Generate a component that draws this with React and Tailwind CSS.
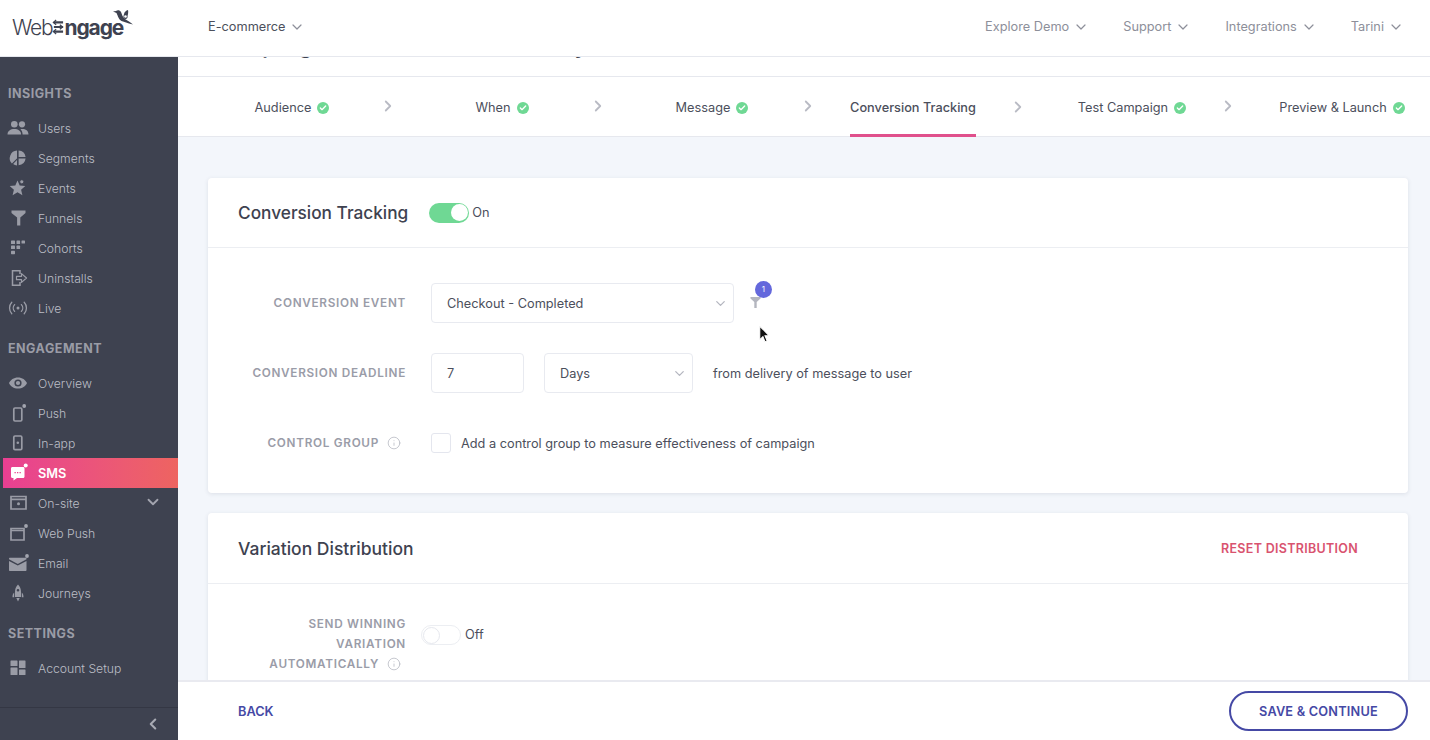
import { ChevronDown, ChevronRight, ChevronLeft, Check, Info } from 'lucide-react';

const ICON = 'w-[22px] h-[22px] text-[#9a9ca6]';

const Dot = ({ cx, cy }) => <circle cx={cx} cy={cy} r="1.9" fill="#a3a5af" stroke="none" />;

const icons = {
  users: (
    <svg viewBox="0 0 22 22" className={ICON} fill="currentColor">
      <circle cx="7.3" cy="7.3" r="3.3" />
      <circle cx="15" cy="7.3" r="3.1" />
      <path d="M0.5 17.5c0-3.8 3-5.6 6.8-5.6s6.8 1.8 6.8 5.6z" />
      <path d="M15.6 17.5c0-2.2-.8-3.9-2.2-5.2.6-.2 1.2-.3 1.9-.3 3.4 0 6.2 1.7 6.2 5.5z" />
    </svg>
  ),
  segments: (
    <svg viewBox="0 0 22 22" className={ICON} fill="currentColor">
      <path d="M10 3.6v7.8h-.1l-5 5.2A7.7 7.7 0 0 1 10 3.6z" />
      <path d="M11.6 3.6a7.7 7.7 0 0 1 7 6.4h-7z" />
      <path d="M11.6 11.6h7a7.7 7.7 0 0 1-7 6.7z" />
      <path d="M10 13.1v5.3a7.6 7.6 0 0 1-3.9-1.3z" />
    </svg>
  ),
  events: (
    <svg viewBox="0 0 22 22" className={ICON} fill="currentColor">
      <path d="M10.5 3.5l2.2 5 5.6.5-4.2 3.7 1.3 5.5-4.9-2.9-4.9 2.9 1.3-5.5L2.7 9l5.6-.5z" />
      <circle cx="14.8" cy="4.8" r="2.1" stroke="#3e4250" strokeWidth="1" />
    </svg>
  ),
  funnels: (
    <svg viewBox="0 0 22 22" className={ICON} fill="currentColor">
      <path d="M4.5 3.5h14v2.4l-5.2 4.6v8h-3.2v-8L4.5 5.9z" />
    </svg>
  ),
  cohorts: (
    <svg viewBox="0 0 22 22" className={ICON} fill="currentColor">
      <rect x="4" y="3.5" width="4" height="3.5" rx=".6" />
      <rect x="9.5" y="3.5" width="3.6" height="3.5" rx=".6" />
      <rect x="14.5" y="3.5" width="3.5" height="3" rx=".6" />
      <rect x="4" y="8.6" width="4" height="3.5" rx=".6" />
      <rect x="9.5" y="8.6" width="3.6" height="3.5" rx=".6" />
      <rect x="4" y="13.7" width="4" height="3.5" rx=".6" />
    </svg>
  ),
  uninstalls: (
    <svg viewBox="0 0 22 22" className={ICON} fill="none" stroke="currentColor" strokeWidth="1.5">
      <path d="M13 7V3.8H5.5v14.4H13V15" />
      <path d="M9.5 9.3h5V6.6l5 4.4-5 4.4v-2.7h-5z" strokeLinejoin="round" strokeWidth="1.2" />
    </svg>
  ),
  live: (
    <svg viewBox="0 0 22 22" className={ICON} fill="none" stroke="currentColor" strokeWidth="1.3" strokeLinecap="round">
      <circle cx="11" cy="11" r="1.5" fill="currentColor" stroke="none" />
      <path d="M7.6 7.6a5 5 0 0 0 0 6.8M14.4 7.6a5 5 0 0 1 0 6.8" />
      <path d="M4.8 5.2a8.6 8.6 0 0 0 0 11.6M17.2 5.2a8.6 8.6 0 0 1 0 11.6" />
    </svg>
  ),
  overview: (
    <svg viewBox="0 0 22 22" className={ICON} fill="currentColor">
      <path fillRule="evenodd" d="M11 5.4c4.2 0 7.6 2.4 9 5.6-1.4 3.2-4.8 5.6-9 5.6S3.4 14.2 2 11c1.4-3.2 4.8-5.6 9-5.6zm0 2a3.6 3.6 0 1 0 0 7.2 3.6 3.6 0 0 0 0-7.2zm0 1.5a2.1 2.1 0 1 1 0 4.2 2.1 2.1 0 0 1 0-4.2z" />
    </svg>
  ),
  push: (
    <svg viewBox="0 0 22 22" className={ICON} fill="none" stroke="currentColor" strokeWidth="1.7">
      <rect x="6.8" y="6" width="8" height="13" rx="1.2" />
      <Dot cx="17.2" cy="4" />
    </svg>
  ),
  inapp: (
    <svg viewBox="0 0 22 22" className={ICON} fill="none" stroke="currentColor" strokeWidth="1.7">
      <rect x="6.8" y="4" width="8" height="13.6" rx="1.2" />
      <circle cx="10.8" cy="10.8" r="1.3" fill="currentColor" stroke="none" />
    </svg>
  ),
  sms: (
    <svg viewBox="0 0 22 22" className="w-[22px] h-[22px]" fill="#fff">
      <path fillRule="evenodd" d="M5.5 5H16c1 0 1.5.6 1.5 1.5v8c0 .9-.5 1.5-1.5 1.5h-6l-3.5 2.5V16h-1C4.5 16 4 15.4 4 14.500v-8C4 5.600 4.500 5 5.500 5zm2 5h1.300v1.300H7.500zm2.500 0h1.300v1.300H10zm2.500 0h1.300v1.300h-1.300z" />
      <circle cx="18.700" cy="3.500" r="2" />
    </svg>
  ),
  onsite: (
    <svg viewBox="0 0 22 22" className={ICON} fill="none" stroke="currentColor" strokeWidth="1.7">
      <path d="M4 4.500h15v12.500H4zM4 7.300h15" />
      <circle cx="11.500" cy="11.700" r="1.500" fill="currentColor" stroke="none" />
    </svg>
  ),
  webpush: (
    <svg viewBox="0 0 22 22" className={ICON} fill="none" stroke="currentColor" strokeWidth="1.7">
      <path d="M4 6.500h13v11.500H4zM4 8.500h13" />
      <Dot cx="19" cy="4" />
    </svg>
  ),
  email: (
    <svg viewBox="0 0 22 22" className={ICON} fill="currentColor">
      <path d="M2 6.700c0-.6.400-1 1-1h15.500c.6 0 1 .4 1 1v.5l-8.700 4.800L2 7.200z" />
      <path d="M2 9l8.800 4.400L19.500 9v9c0 .6-.4 1-1 1H3c-.6 0-1-.4-1-1z" />
      <circle cx="20" cy="4" r="1.900" fill="#a3a5af" />
    </svg>
  ),
  journeys: (
    <svg viewBox="0 0 22 22" className={ICON} fill="currentColor">
      <path fillRule="evenodd" d="M11 2.500c2.200 2.200 3 4.800 3 7.500v5H8v-5c0-2.700.8-5.300 3-7.500zm0 4.500a1.300 1.300 0 1 0 0 2.600A1.300 1.300 0 0 0 11 7z" />
      <path d="M7.200 10.500v4.700H5.500c0-2 .4-3.600 1.700-4.700zM14.800 10.500v4.700h1.700c0-2-.4-3.600-1.700-4.700zM9.300 16h3.400L11 19.500z" />
    </svg>
  ),
  setup: (
    <svg viewBox="0 0 22 22" className={ICON} fill="currentColor">
      <rect x="3.500" y="3.500" width="7" height="5.500" rx=".5" />
      <rect x="12" y="3.500" width="6.500" height="7.500" rx=".5" />
      <rect x="3.500" y="10.500" width="7" height="7.500" rx=".5" />
      <rect x="12" y="12.500" width="6.500" height="5.500" rx=".5" />
    </svg>
  ),
};

const groups = [
  {
    title: 'INSIGHTS',
    items: [
      ['users', 'Users'],
      ['segments', 'Segments'],
      ['events', 'Events'],
      ['funnels', 'Funnels'],
      ['cohorts', 'Cohorts'],
      ['uninstalls', 'Uninstalls'],
      ['live', 'Live'],
    ],
  },
  {
    title: 'ENGAGEMENT',
    items: [
      ['overview', 'Overview'],
      ['push', 'Push'],
      ['inapp', 'In-app'],
      ['sms', 'SMS'],
      ['onsite', 'On-site'],
      ['webpush', 'Web Push'],
      ['email', 'Email'],
      ['journeys', 'Journeys'],
    ],
  },
  {
    title: 'SETTINGS',
    items: [['setup', 'Account Setup']],
  },
];

const NavItem = ({ icon, label }) => {
  if (label === 'SMS') {
    return (
      <div className="h-[30px] ml-[3px] pl-[4px] flex items-center gap-[9px] bg-gradient-to-r from-[#e83f92] to-[#ee6460]">
        {icons[icon]}
        <span className="pt-[1px] text-[12.75px] font-semibold text-white">{label}</span>
      </div>
    );
  }
  return (
    <div className="h-[30px] pl-[7px] pr-[16px] flex items-center gap-[9px]">
      {icons[icon]}
      <span className="flex-1 pt-[2px] text-[12.2px] text-[#bcbec6] font-light">{label}</span>
      {label === 'On-site' && <ChevronDown className="w-[18px] h-[18px] text-[#a3a5af] -mt-[2px]" strokeWidth={2.4} />}
    </div>
  );
};

const Sidebar = () => (
  <aside className="w-[178px] shrink-0 bg-[#3e4250] flex flex-col">
    <div className="flex-1 pt-[21px] overflow-hidden">
      {groups.map((g) => (
        <div key={g.title} className="mb-[10px]">
          <div className="h-[30px] mb-[5px] pl-[8px] pt-[2px] flex items-center text-[12.5px] font-bold tracking-[0.5px] text-[#9a9ca6]">
            {g.title}
          </div>
          {g.items.map(([icon, label]) => (
            <NavItem key={label} icon={icon} label={label} />
          ))}
        </div>
      ))}
    </div>
    <div className="h-[33px] border-t border-[#343744] flex items-center justify-end pr-[16px]">
      <ChevronLeft className="w-[18px] h-[18px] text-[#a8aab3]" strokeWidth={2.8} />
    </div>
  </aside>
);

const Logo = () => (
  <div className="w-[208px] shrink-0 pl-[12px] flex items-center">
    <div className="relative h-[24px] flex items-center text-[#3e4250] text-[21px] leading-none">
      <span className="font-light tracking-[-1.2px]">Web</span>
      <svg viewBox="0 0 13 16" className="w-[12px] h-[16px]" fill="none" stroke="#3e4250" strokeWidth="2.4">
        <path d="M2 3h10M2 8h10M2 13h10" />
        <path d="M4.500 0.500L1.500 3l3 2.500M8.500 5.500l3 2.500-3 2.500M4.500 10.500L1.500 13l3 2.500" strokeWidth="1.300" />
      </svg>
      <span className="font-bold tracking-[-1.1px]">ngage</span>
      <svg viewBox="0 0 20 18" className="absolute left-[101px] -top-[6px] w-[20px] h-[18px]" fill="#3e4250">
        <path d="M0 2.500L3 2C4.500 .5 7 1 8 3c1 2.500 1.500 5 4 7 2.500 1.500 5.500 3.500 8 5.500L16 14.500c-2.500-1-5-1.500-7.500-2.500-3-1.500-3.500-5-5-8z" />
        <path d="M11 5c.5-2 2-3.500 4-4 .5 2 0 4.500-.5 6 .5 1.500-.5 3-2 3s-2.500-1.500-2-3z" />
        <circle cx="12.500" cy="7.500" r="1.300" fill="#fff" />
      </svg>
    </div>
  </div>
);

const HeaderLink = ({ label }) => (
  <div className="flex items-center gap-[4px] text-[12.75px] text-[#8d8f9a]">
    {label}
    <ChevronDown className="w-[16px] h-[16px] text-[#8d8f9a]" strokeWidth={1.8} />
  </div>
);

const Header = () => (
  <header className="h-[57px] shrink-0 pb-[2px] bg-white border-b border-[#e6e8ee] flex items-center">
    <Logo />
    <div className="flex items-center gap-[3px] text-[12.75px] text-[#4c4f5c]">
      E-commerce
      <ChevronDown className="w-[16px] h-[16px] text-[#8d8f9a]" strokeWidth={1.8} />
    </div>
    <div className="ml-auto pr-[26px] flex items-center gap-[34px]">
      <HeaderLink label="Explore Demo" />
      <HeaderLink label="Support" />
      <HeaderLink label="Integrations" />
      <HeaderLink label="Tarini" />
    </div>
  </header>
);

const steps = [
  { label: 'Audience', done: true },
  { label: 'When', done: true },
  { label: 'Message', done: true },
  { label: 'Conversion Tracking', active: true },
  { label: 'Test Campaign', done: true },
  { label: 'Preview & Launch', done: true, last: true },
];

const Steps = () => (
  <div className="h-[61px] shrink-0 bg-white border-y border-[#e6e8ee] flex pl-[9px]">
    {steps.map((s) => (
      <div key={s.label} className="w-[210px] shrink-0 grid grid-cols-[1fr_auto_1fr] items-center">
        <div />
        <div className="h-full flex items-center gap-[6px] text-[12.75px] text-[#4c4f5c]">
          <span className={s.active ? 'h-[60px] self-start flex items-center pt-[5px] border-b-[3px] border-[#e0508c] font-medium' : 'pt-[2px]'}>
            {s.label}
          </span>
          {s.done ? (
            <span className="w-[12px] h-[12px] rounded-full bg-[#6fd894] flex items-center justify-center mt-[2px]">
              <Check className="w-[8px] h-[8px] text-white" strokeWidth={4} />
            </span>
          ) : (
            <span className="w-[12px]" />
          )}
        </div>
        {!s.last && (
          <ChevronRight className="justify-self-end -mt-[1px] w-[18px] h-[18px] text-[#b9bbc4]" strokeWidth={2.4} />
        )}
      </div>
    ))}
  </div>
);

const Toggle = ({ on }) => (
  <div className={`w-[40px] h-[20px] rounded-full flex items-center px-[1px] ${on ? 'bg-[#6fd894] justify-end' : 'bg-white border border-[#eceef2]'}`}>
    <span className={`w-[17px] h-[17px] rounded-full bg-white ${on ? '' : 'border border-[#e6e8ee]'}`} />
  </div>
);

const Select = ({ value, className }) => (
  <div className={`h-[40px] bg-white border border-[#e8eaf0] rounded-[4px] pl-[15px] pr-[5px] flex items-center justify-between ${className}`}>
    <span className="pt-[1px]">{value}</span>
    <ChevronDown className="w-[15px] h-[15px] text-[#b4b6bf]" strokeWidth={2} />
  </div>
);

const Label = ({ children, className = '' }) => (
  <div className={`w-[198px] shrink-0 text-right text-[11.75px] leading-[20px] font-semibold tracking-[0.7px] text-[#9a9ca8] ${className}`}>
    {children}
  </div>
);

const InfoIcon = () => <Info className="inline-block w-[14px] h-[14px] ml-[8px] -mt-[2px] text-[#b4b6bf]" strokeWidth={1.3} />;

const CardHead = ({ title, titleClass, className, children }) => (
  <div className={`border-b border-[#eceef2] pl-[30px] pr-[50px] flex items-center ${className}`}>
    <h2 className={`font-medium text-[#3e4250] ${titleClass}`}>{title}</h2>
    {children}
  </div>
);

const Card = ({ children, className }) => (
  <section className={`bg-white rounded-[4px] shadow-[0_1px_4px_rgba(60,66,87,0.12)] ${className}`}>{children}</section>
);

const Cursor = () => (
  <svg viewBox="0 0 12 18" className="absolute left-[758px] top-[325px] w-[13px] h-[19px] z-10">
    <path d="M1.500 1v13l3-3 2 5 2-1-2-4.800h4z" fill="#111" stroke="#fff" strokeWidth="1" />
  </svg>
);

export default function App() {
  return (
    <div className="h-[740px] w-[1430px] overflow-hidden flex flex-col bg-white relative font-['Inter',sans-serif]">
      <Header />
      <div className="flex flex-1 min-h-0">
        <Sidebar />
        <main className="flex-1 min-w-0 flex flex-col bg-[#f3f6fb]">
          <div className="h-[19px] shrink-0 bg-white overflow-hidden pl-[30px]">
            <div className="-mt-[28px] text-[24px] leading-[32px] font-medium tracking-[0.5px] text-[#3e4250] whitespace-nowrap">
              Campaign Details and Summary
            </div>
          </div>
          <Steps />
          <div className="flex-1 min-h-0 overflow-hidden pl-[30px] pr-[22px] pt-[41px]">
            <Card>
              <CardHead title="Conversion Tracking" className="h-[70px]" titleClass="pt-[1px] text-[17.25px]">
                <div className="ml-[21px] flex items-center gap-[3px]">
                  <Toggle on />
                  <span className="text-[12.75px] text-[#4c4f5c]">On</span>
                </div>
              </CardHead>
              <div className="pt-[35px] pb-[30px] flex flex-col gap-[30px] text-[12.75px] text-[#4c4f5c]">
                <div className="h-[40px] flex items-center gap-[25px]">
                  <Label>CONVERSION EVENT</Label>
                  <Select value="Checkout - Completed" className="w-[303px]" />
                  <div className="relative -ml-[9px] -mt-[5px]">
                    <svg viewBox="0 0 12 14" className="w-[11px] h-[13px] mt-[3px]" fill="#b4b6bf">
                      <path d="M0.500 1h11v1.500L7.300 6.500v6.500H4.700V6.500L0.500 2.500z" />
                    </svg>
                    <span className="absolute left-[5px] -top-[12px] w-[17px] h-[17px] rounded-full bg-[#6468dc] text-white text-[8px] flex items-center justify-center">1</span>
                  </div>
                </div>
                <div className="h-[40px] flex items-center gap-[25px]">
                  <Label>CONVERSION DEADLINE</Label>
                  <div className="flex items-center">
                    <div className="w-[93px] h-[40px] border border-[#e8eaf0] rounded-[4px] pl-[15px] pt-[1px] flex items-center">7</div>
                    <Select value="Days" className="w-[149px] ml-[20px]" />
                    <span className="ml-[20px] pt-[1px]">from delivery of message to user</span>
                  </div>
                </div>
                <div className="h-[40px] flex items-center gap-[25px]">
                  <Label>CONTROL GROUP<InfoIcon /><span className="inline-block w-[5px]" /></Label>
                  <div className="flex items-center gap-[10px]">
                    <div className="w-[20px] h-[20px] border border-[#e4e6ee] rounded-[3px]" />
                    <span className="pt-[1px]">Add a control group to measure effectiveness of campaign</span>
                  </div>
                </div>
              </div>
            </Card>
            <Card className="mt-[20px]">
              <CardHead title="Variation Distribution" className="h-[71px]" titleClass="pt-[2px] text-[17.5px]">
                <span className="ml-auto pt-[2px] text-[12.5px] font-semibold tracking-[0.3px] text-[#d9536f]">RESET DISTRIBUTION</span>
              </CardHead>
              <div className="pt-[29px] pb-[40px] flex items-start gap-[15px] text-[12.75px] text-[#4c4f5c]">
                <Label className="mt-[1px]">
                  SEND WINNING<br />VARIATION<br />AUTOMATICALLY<InfoIcon /><span className="inline-block w-[5px]" />
                </Label>
                <div className="mt-[12px] flex items-center gap-[4px]">
                  <Toggle />
                  <span>Off</span>
                </div>
              </div>
            </Card>
          </div>
          <footer className="h-[60px] shrink-0 bg-white border-t-[2px] border-[#e9eaf0] pl-[60px] pr-[22px] flex items-center justify-between">
            <span className="pt-[1px] text-[12.75px] font-semibold text-[#4549a5]">BACK</span>
            <div className="w-[179px] h-[40px] pt-[1px] rounded-full border-[2px] border-[#4549a5] flex items-center justify-center text-[12.75px] font-semibold tracking-[0.2px] text-[#4549a5]">
              SAVE &amp; CONTINUE
            </div>
          </footer>
        </main>
      </div>
      <Cursor />
    </div>
  );
}
